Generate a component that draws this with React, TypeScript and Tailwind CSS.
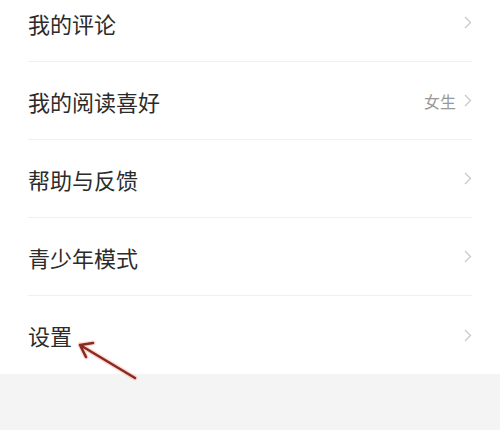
const rows: { label: string; value?: string }[] = [
  { label: "我的评论" },
  { label: "我的阅读喜好", value: "女生" },
  { label: "帮助与反馈" },
  { label: "青少年模式" },
  { label: "设置" },
];

function Chevron() {
  return (
    <svg width="8" height="13" viewBox="0 0 8 13" fill="none" className="shrink-0">
      <path d="M1 1l5.5 5.5L1 12" stroke="#c8c8c8" strokeWidth="1.3" />
    </svg>
  );
}

export default function App() {
  return (
    <div
      className="relative w-[500px] h-[440px] overflow-hidden bg-white"
      style={{ fontFamily: '"Noto Sans CJK SC", "Noto Sans", sans-serif' }}
    >
      {/* Menu list */}
      <div className="-mt-4 px-7">
        {rows.map((row, i) => (
          <div
            key={row.label}
            className={`flex items-center h-[78px] ${i < rows.length - 1 ? "border-b border-[#f0f0f0]" : ""}`}
          >
            <span className="flex-1 text-[22px] leading-none text-[#2b2b2b]">{row.label}</span>
            {row.value && <span className="mr-2 text-[16px] text-[#999999]">{row.value}</span>}
            <Chevron />
          </div>
        ))}
      </div>

      {/* Gray footer band */}
      <div className="h-14 bg-[#f4f4f4]" />

      {/* Annotation arrow */}
      <svg className="absolute left-0 top-0 pointer-events-none" width="500" height="440">
        <g stroke="#ff6a55" strokeOpacity="0.25" strokeWidth="5" strokeLinecap="round" fill="none">
          <path d="M135 378L80 345M80 345L93 343M80 345L86 357" />
        </g>
        <g stroke="#8a2a22" strokeWidth="2.6" strokeLinecap="round" fill="none">
          <path d="M135 378L80 345M80 345L93 343M80 345L86 357" />
        </g>
      </svg>
    </div>
  );
}
